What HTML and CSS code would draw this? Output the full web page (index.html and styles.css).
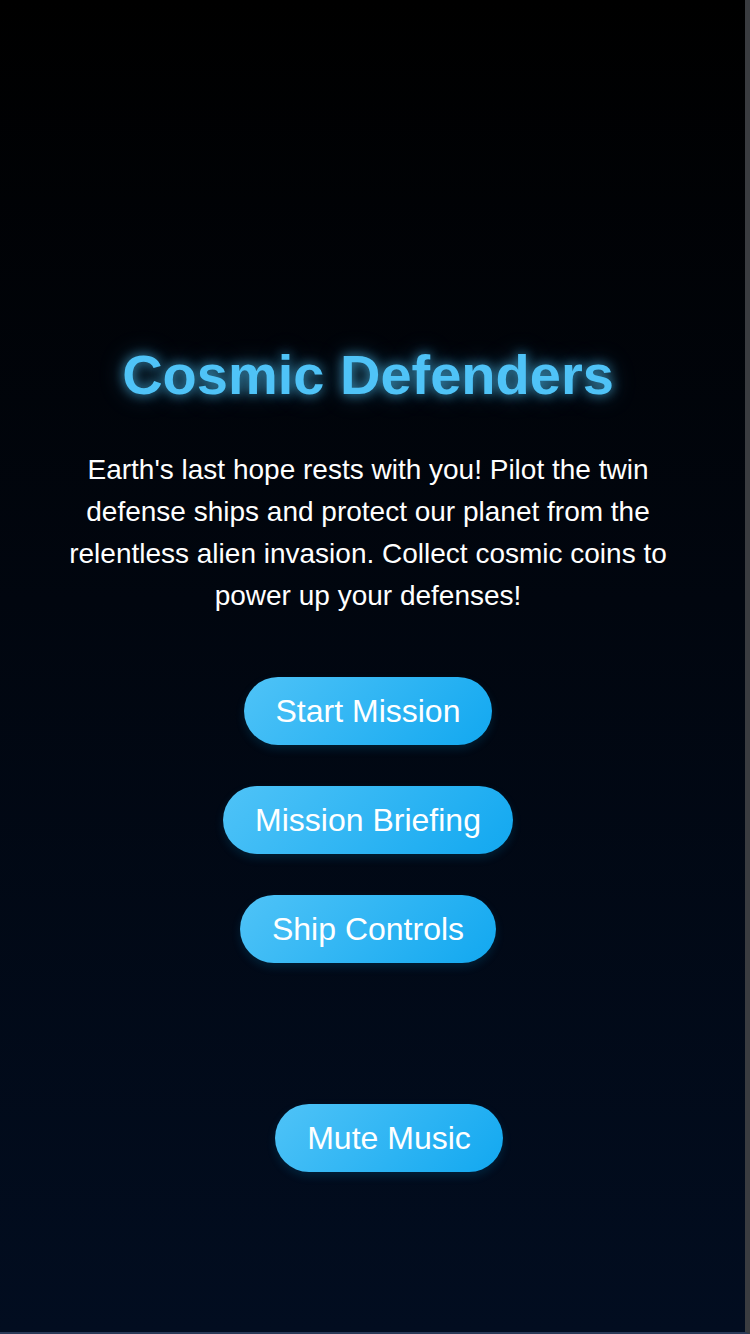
FILE: index.html
```html
<!DOCTYPE html>
<html lang="en">
<head>
<meta charset="utf-8">
<title>Cosmic Defenders</title>
<link rel="stylesheet" href="styles.css">
</head>
<body>
<div class="page">
  <main class="menu">
    <h1 class="title">Cosmic Defenders</h1>
    <p class="intro">Earth's last hope rests with you! Pilot the twin defense ships and protect our planet from the relentless alien invasion. Collect cosmic coins to power up your defenses!</p>
    <div class="actions">
      <button class="btn">Start Mission</button>
      <button class="btn">Mission Briefing</button>
      <button class="btn">Ship Controls</button>
    </div>
    <button class="btn btn-mute">Mute Music</button>
  </main>
</div>
</body>
</html>
```

FILE: styles.css
```css
html, body {
  margin: 0;
  padding: 0;
  background: #000;
}
.page {
  box-sizing: border-box;
  width: 750px;
  height: 1334px;
  background: linear-gradient(to bottom, #000000 0%, #01060f 45%, #020d20 100%);
  border-right: 5px solid #3a3c40;
  border-bottom: 2px solid #2b3a58;
  font-family: "Liberation Sans", Arial, sans-serif;
  color: #fff;
  overflow: hidden;
}
.menu {
  display: flex;
  flex-direction: column;
  align-items: center;
  padding: 343px 9px 0 0;
}
.title {
  margin: 0;
  font-size: 56px;
  line-height: 64px;
  font-weight: bold;
  color: #4fc3f7;
  text-shadow: 0 0 12px rgba(79, 195, 247, 0.75), 0 0 24px rgba(79, 195, 247, 0.35);
}
.intro {
  margin: 42px 0 0;
  max-width: 630px;
  text-align: center;
  font-size: 28px;
  line-height: 42px;
}
.actions {
  margin-top: 60px;
  display: flex;
  flex-direction: column;
  align-items: center;
  gap: 41px;
}
.btn {
  border: none;
  border-radius: 40px;
  padding: 16px 32px;
  font-family: "Liberation Sans", Arial, sans-serif;
  font-size: 32px;
  line-height: 36px;
  color: #fff;
  background: linear-gradient(135deg, #4fc3f7 0%, #12a8f0 100%);
  box-shadow: 0 4px 10px rgba(3, 169, 244, 0.15);
  cursor: pointer;
}
.btn-mute {
  margin-top: 141px;
  margin-left: 42px;
}
```
